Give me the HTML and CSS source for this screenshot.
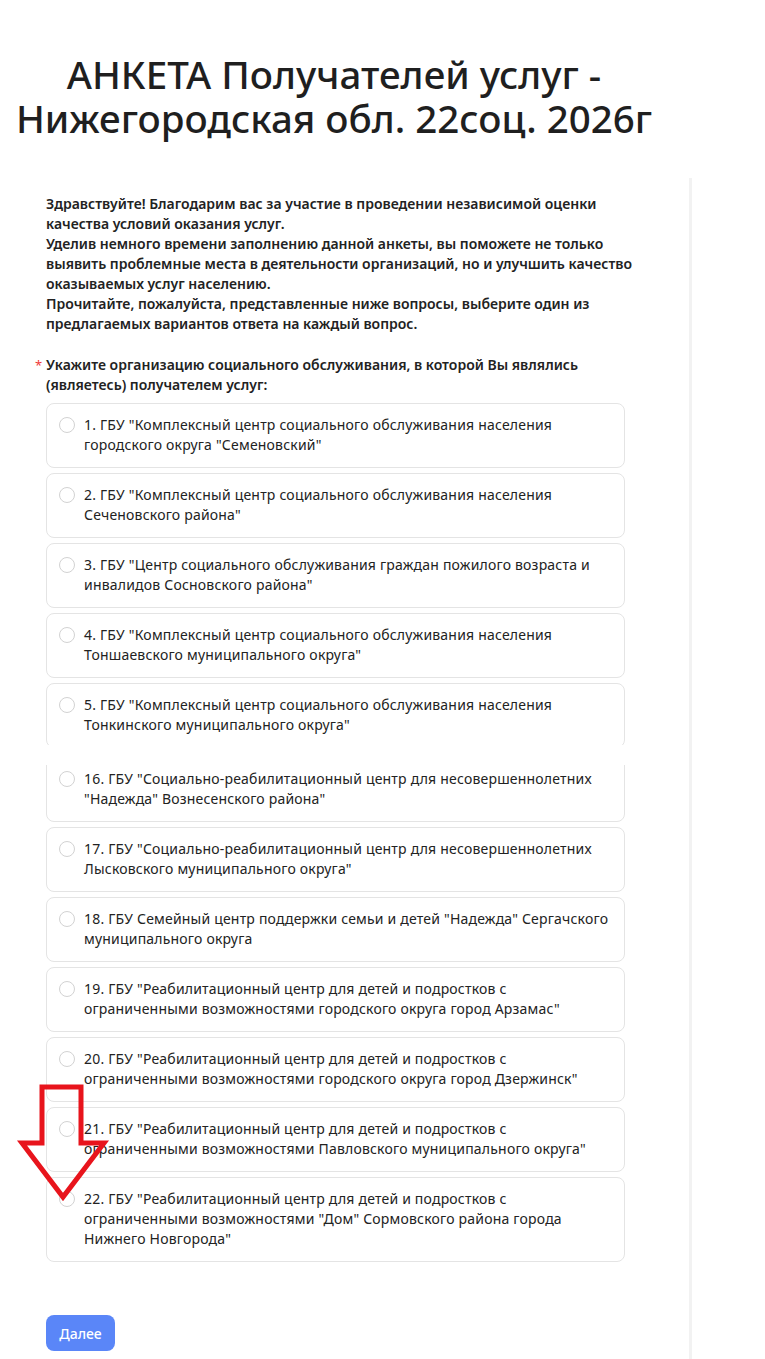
FILE: index.html
```html
<!DOCTYPE html>
<html lang="ru">
<head>
<meta charset="utf-8">
<title>АНКЕТА Получателей услуг</title>
<link rel="stylesheet" href="styles.css">
</head>
<body>
<div class="page">
  <h1 class="title"><span class="tline">АНКЕТА Получателей услуг -</span><span class="tline">Нижегородская обл. 22соц. 2026г</span></h1>
  <div class="layout">
    <main class="form">
      <p class="intro">Здравствуйте! Благодарим вас за участие в проведении независимой оценки<br>качества условий оказания услуг.<br>Уделив немного времени заполнению данной анкеты, вы поможете не только<br>выявить проблемные места в деятельности организаций, но и улучшить качество<br>оказываемых услуг населению.<br>Прочитайте, пожалуйста, представленные ниже вопросы, выберите один из<br>предлагаемых вариантов ответа на каждый вопрос.</p>
      <div class="question"><span class="req">*</span><span class="qtext">Укажите организацию социального обслуживания, в которой Вы являлись<br>(являетесь) получателем услуг:</span></div>

      <div class="clip clip-top">
        <div class="options">
          <label class="option"><span class="radio"></span><span class="otext">1. ГБУ "Комплексный центр социального обслуживания населения<br>городского округа "Семеновский"</span></label>
          <label class="option"><span class="radio"></span><span class="otext">2. ГБУ "Комплексный центр социального обслуживания населения<br>Сеченовского района"</span></label>
          <label class="option"><span class="radio"></span><span class="otext">3. ГБУ "Центр социального обслуживания граждан пожилого возраста и<br>инвалидов Сосновского района"</span></label>
          <label class="option"><span class="radio"></span><span class="otext">4. ГБУ "Комплексный центр социального обслуживания населения<br>Тоншаевского муниципального округа"</span></label>
          <label class="option"><span class="radio"></span><span class="otext">5. ГБУ "Комплексный центр социального обслуживания населения<br>Тонкинского муниципального округа"</span></label>
        </div>
      </div>

      <div class="clip clip-bottom">
        <div class="options shifted">
          <label class="option"><span class="radio"></span><span class="otext">16. ГБУ "Социально-реабилитационный центр для несовершеннолетних<br>"Надежда" Вознесенского района"</span></label>
          <label class="option"><span class="radio"></span><span class="otext">17. ГБУ "Социально-реабилитационный центр для несовершеннолетних<br>Лысковского муниципального округа"</span></label>
          <label class="option"><span class="radio"></span><span class="otext">18. ГБУ Семейный центр поддержки семьи и детей "Надежда" Сергачского<br>муниципального округа</span></label>
          <label class="option"><span class="radio"></span><span class="otext">19. ГБУ "Реабилитационный центр для детей и подростков с<br>ограниченными возможностями городского округа город Арзамас"</span></label>
          <label class="option"><span class="radio"></span><span class="otext">20. ГБУ "Реабилитационный центр для детей и подростков с<br>ограниченными возможностями городского округа город Дзержинск"</span></label>
          <label class="option"><span class="radio"></span><span class="otext">21. ГБУ "Реабилитационный центр для детей и подростков с<br>ограниченными возможностями Павловского муниципального округа"</span></label>
          <label class="option"><span class="radio"></span><span class="otext">22. ГБУ "Реабилитационный центр для детей и подростков с<br>ограниченными возможностями "Дом" Сормовского района города<br>Нижнего Новгорода"</span></label>
        </div>
      </div>

      <button class="next" type="button">Далее</button>
    </main>
  </div>

  <svg class="arrow" width="120" height="130" viewBox="0 0 120 130" aria-hidden="true">
    <polygon points="42,7 81,7 81,63 104,63 63,117 22,63 42,63" fill="none" stroke="#e8141c" stroke-width="5" stroke-linejoin="miter"/>
  </svg>
</div>
</body>
</html>
```

FILE: styles.css
```css
html, body {
  margin: 0;
  padding: 0;
  background: #ffffff;
}

body {
  font-family: "Noto Sans", "Open Sans", "DejaVu Sans", sans-serif;
  color: #222222;
}

.page {
  position: relative;
  width: 765px;
  min-height: 1359px;
}

.title {
  width: 668px;
  margin: 0;
  padding-top: 52px;
  text-align: center;
  font-size: 38.5px;
  line-height: 44px;
  font-weight: 500;
  color: #1f1f1f;
}

.tline {
  display: block;
  height: 44px;
}

.layout {
  display: flex;
  margin-top: 38px;
}

.form {
  box-sizing: border-box;
  width: 692px;
  min-height: 1181px;
  padding: 16px 64px 8px 46px;
  border-right: 3px solid #f2f2f2;
}

.intro {
  margin: 0;
  font-size: 14px;
  line-height: 20px;
  font-weight: 600;
  white-space: nowrap;
}

.question {
  display: flex;
  margin: 21px 0 8px -11px;
  font-size: 14px;
  line-height: 20px;
  font-weight: 600;
  white-space: nowrap;
}

.req {
  width: 11px;
  flex: none;
  color: #f03a3a;
  font-weight: 400;
  font-size: 13px;
}

.clip {
  overflow: hidden;
}

.clip-top {
  height: 342px;
}

.clip-bottom {
  margin-top: 20px;
}

.options {
  display: flex;
  flex-direction: column;
  gap: 5px;
}

.options.shifted {
  margin-top: -8px;
}

.option {
  display: flex;
  align-items: flex-start;
  gap: 9px;
  padding: 11px 12px 12px 12px;
  border: 1px solid #e4e4e4;
  border-radius: 8px;
  background: #ffffff;
  font-size: 14px;
  line-height: 20px;
  font-weight: 400;
  letter-spacing: 0.2px;
  color: #222222;
}

.radio {
  flex: none;
  box-sizing: border-box;
  width: 16px;
  height: 16px;
  margin-top: 2px;
  border: 1px solid #d2d2d2;
  border-radius: 50%;
  background: #ffffff;
}

.otext {
  white-space: nowrap;
}

.next {
  display: block;
  margin-top: 53px;
  width: 69px;
  height: 36px;
  border: none;
  border-radius: 8px;
  background: #5a86f8;
  color: #ffffff;
  font-family: "Noto Sans", "Open Sans", sans-serif;
  font-size: 14px;
  font-weight: 500;
  padding: 0;
}

.arrow {
  position: absolute;
  left: 0;
  top: 1080px;
}
```
